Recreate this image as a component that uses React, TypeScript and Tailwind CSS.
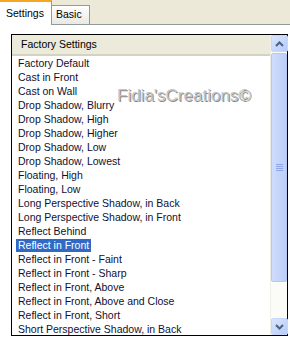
import React from 'react';

const items = [
  'Factory Default',
  'Cast in Front',
  'Cast on Wall',
  'Drop Shadow, Blurry',
  'Drop Shadow, High',
  'Drop Shadow, Higher',
  'Drop Shadow, Low',
  'Drop Shadow, Lowest',
  'Floating, High',
  'Floating, Low',
  'Long Perspective Shadow, in Back',
  'Long Perspective Shadow, in Front',
  'Reflect Behind',
  'Reflect in Front',
  'Reflect in Front - Faint',
  'Reflect in Front - Sharp',
  'Reflect in Front, Above',
  'Reflect in Front, Above and Close',
  'Reflect in Front, Short',
  'Short Perspective Shadow, in Back',
];

const SELECTED = 'Reflect in Front';

// XP-style scroll arrow button
const ScrollButton = ({ down }: { down?: boolean }) => (
  <div className="h-[17px] w-[17px] shrink-0 rounded-[2px] border border-[#c6d6fc] bg-gradient-to-br from-[#dbe6fe] to-[#b6cbf9] flex items-center justify-center">
    <svg width="9" height="6" viewBox="0 0 9 6" className={down ? 'rotate-180' : ''}>
      <path d="M1 5 L4.5 1.5 L8 5" fill="none" stroke="#4d6185" strokeWidth="2" />
    </svg>
  </div>
);

const App = () => {
  return (
    <div className="relative w-[290px] h-[344px] overflow-hidden bg-white font-['Liberation_Sans',Arial,sans-serif] text-[10.5px] text-[#101030]">
      {/* TABS */}
      <div className="flex h-[25px] bg-[#ece9d8]">
        <div className="w-[52px] h-[25px] bg-white border-t-2 border-t-[#f5a623] border-r border-r-[#919b9c] flex items-start justify-start pl-[6px] pt-[4px] text-black">
          Settings
        </div>
        <div className="mt-[5px] w-[38px] h-[20px] border-t border-r border-b border-[#919b9c] bg-gradient-to-b from-white to-[#e9e8e1] flex items-center pl-[4px] text-black">
          Basic
        </div>
        <div className="flex-1 border-b border-[#919b9c]" />
      </div>

      {/* PANEL */}
      <div className="pt-[9px] pl-[11px]">
        <div className="flex w-[277px] h-[302px] border border-black bg-white">
          {/* list */}
          <div className="flex-1 flex flex-col overflow-hidden">
            <div className="h-[21px] shrink-0 bg-[#ebeadb] border-b-2 border-[#d6d2c2] flex items-center pl-[9px] text-black">
              Factory Settings
            </div>
            {items.map((label) => (
              <div key={label} className="h-[14px] shrink-0 flex items-center pl-[4px] whitespace-nowrap">
                <span
                  className={
                    label === SELECTED
                      ? 'px-[2px] leading-[13px] bg-[#316ac5] text-white'
                      : 'px-[2px] leading-[13px]'
                  }
                >
                  {label}
                </span>
              </div>
            ))}
          </div>

          {/* scrollbar */}
          <div className="w-[17px] shrink-0 flex flex-col bg-[#fbfbf7] border-l border-[#efeee8]">
            <ScrollButton />
            <div className="mt-[1px] h-[229px] shrink-0 rounded-[2px] border border-[#b3c6f4] bg-gradient-to-r from-[#cfdcfd] to-[#bccff9] flex items-center justify-center">
              <div className="flex flex-col gap-[1px]">
                <div className="w-[7px] h-[1px] bg-[#8ea6e8]" />
                <div className="w-[7px] h-[1px] bg-[#8ea6e8]" />
                <div className="w-[7px] h-[1px] bg-[#8ea6e8]" />
                <div className="w-[7px] h-[1px] bg-[#8ea6e8]" />
              </div>
            </div>
            <div className="flex-1" />
            <ScrollButton down />
          </div>
        </div>
      </div>

      {/* WATERMARK */}
      <div className="absolute left-[117px] top-[86px] text-[17px] leading-[20px] text-[#c4c4c4] [text-shadow:1px_1px_0_#8c8c8c] pointer-events-none">
        Fidia'sCreations©
      </div>
    </div>
  );
};

export default App;
